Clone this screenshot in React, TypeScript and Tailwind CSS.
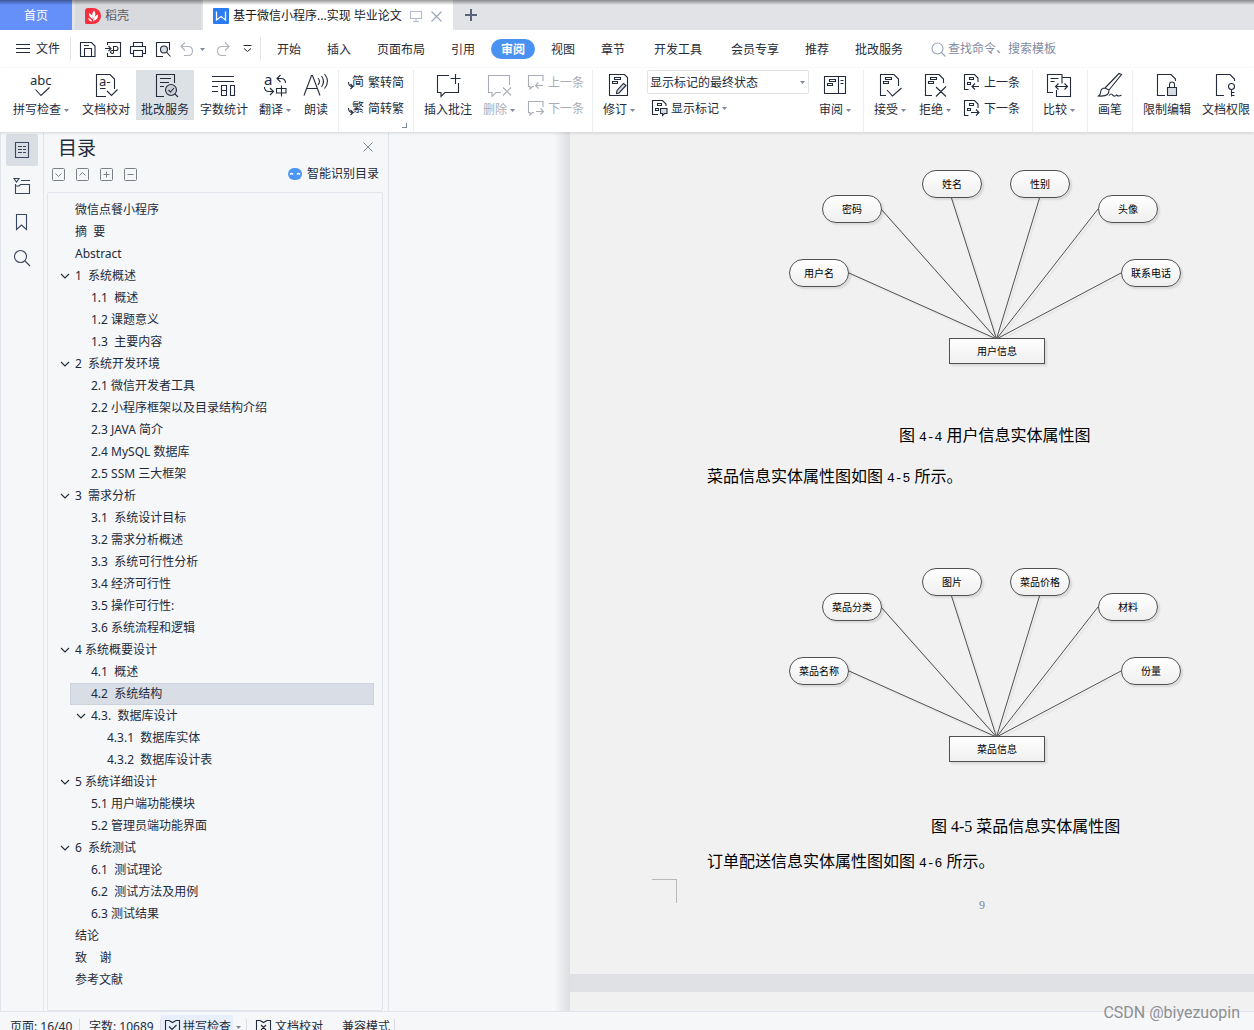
import type { ReactNode } from "react";

const UI_FONT = "font-['Noto_Sans','Noto_Sans_CJK_SC',sans-serif]";

function Svg({ w = 28, h = 26, children, className = "" }: { w?: number; h?: number; children: ReactNode; className?: string }) {
  return (
    <svg
      width={w}
      height={h}
      viewBox={`0 0 ${w} ${h}`}
      fill="none"
      stroke="currentColor"
      strokeWidth={1.1}
      className={`shrink-0 overflow-visible ${className}`}
      aria-hidden="true"
    >
      {children}
    </svg>
  );
}

function Caret({ className = "" }: { className?: string }) {
  return (
    <svg width="5" height="3" viewBox="0 0 5 3" className={`shrink-0 text-[#7d889c] ${className}`} aria-hidden="true">
      <path d="M0 0h5L2.5 3z" fill="currentColor" />
    </svg>
  );
}

/* ---------- Ribbon icons ---------- */

const SpellIcon = () => (
  <Svg>
    <text x="3" y="13" fontSize="13" fill="currentColor" stroke="none" fontFamily="Noto Sans">abc</text>
    <path d="M8.500 17.500l5.500 6 8.500-8" />
  </Svg>
);
const ProofIcon = () => (
  <Svg>
    <path d="M14 24.500H4.500V2.500H18l4.500 4.500V17M15 19l4.500 4.500 6-6M8 16.500h5.500" />
    <text x="7" y="14" fontSize="13" fill="currentColor" stroke="none" fontFamily="Noto Sans">a-</text>
  </Svg>
);
const ReviewServiceIcon = () => (
  <Svg>
    <path d="M13 24.500H5.500V2.500H23.500V11M9 6.500h11M9 10.500h9M9 14.500h4" />
    <circle cx="20" cy="18" r="5.500" fill="#c9ced6" />
    <path d="M17.500 18l2 2 3.500-4M24 22l3 3" />
  </Svg>
);
const CountIcon = () => (
  <Svg>
    <path d="M2 4.500h22M2 9.500h22M2 14.500h6M2 19.500h6M11.500 13.500h5v5h-5zM11.500 18.500h5v5h-5zM20.500 13.500h4v10h-4z" />
  </Svg>
);
const TranslateIcon = () => (
  <Svg>
    <text x="3" y="13" fontSize="15" fill="currentColor" stroke="none" fontFamily="Noto Sans">a</text>
    <path d="M19.500 3L16 6.500 19.500 10M16 6.500H20q4.500 0 4.500 4.500M3.500 15q0 4.500 4.500 4.500h4M9 16l3.500 3.500L9 23" />
    <path d="M15.500 16.500h9.500v4.500h-9.500zM20.500 13.500v11" />
  </Svg>
);
const ReadIcon = () => (
  <Svg>
    <path d="M2 23.500L9.500 3.500h1L18 23.500M5 16.500h10.500M16 6q3 3.500 0 7M19.500 4q4 5.500 0 11M22.500 2q6 7.500 0 14.500" />
  </Svg>
);
const AddCommentIcon = () => (
  <Svg>
    <path d="M15 3.500H3.500v17H7v4l4-4H24.500V11M21.500 2v10M16.500 6.500h10" />
  </Svg>
);
const DelCommentIcon = () => (
  <Svg>
    <path d="M16 20.500h-5l-4 4v-4H3.500v-17H24.500V13M18 15.500l8 8M26 15.500l-8 8" />
  </Svg>
);
const ReviseIcon = () => (
  <Svg>
    <path d="M19.500 2.500H4.500V23.500H22.500V5.500zM9.500 5.500h6v2h-6zM7.500 9.500h5v2h-5z" />
    <path d="M11.500 21.500l.5-3 6.500-7 2.500 2-7 7.500z" fill="#d5dae2" />
  </Svg>
);
const PaneIcon = () => (
  <Svg>
    <path d="M3.500 4.500h21v17h-21zM17.500 4.500v17M19.500 8.500h3M19.500 11.500h3M8.500 7.500h6v2h-6zM6.500 11.500h5v2h-5z" />
  </Svg>
);
const AcceptIcon = () => (
  <Svg>
    <path d="M10 23.500H4.500V2.500H18l4.500 4.500V14M9.500 5.500h6v2h-6zM7.500 9.500h5v2h-5zM11 18l5.500 6 9-8" />
  </Svg>
);
const RejectIcon = () => (
  <Svg>
    <path d="M11 23.500H4.500V2.500H18l4.500 4.500V11M9.500 5.500h6v2h-6zM7.500 9.500h5v2h-5zM15 15l10 9.500M25 14.500L15 24.500" />
  </Svg>
);
const CompareIcon = () => (
  <Svg>
    <path d="M8 20.500H2.500V2.500h14.500v9M17 5.500h8.500V24.500H11.500V18M5.500 6.500h8M5.500 9.500h4M10.500 14.500h12M13.500 11.500l-3 3 3 3M19.500 11.500l3 3-3 3" />
  </Svg>
);
const BrushIcon = () => (
  <Svg>
    <path d="M9 16L23 1.500l2.500 1L13 18M9 16q-4 0-4.500 4.500 0 2-2 3.500 6.500.500 9-1.500 1.500-2 1.500-4.500l-4-2M13 23.500q2.500-3 4 0 2 1.500 3.500-.5 2 2 5 0" />
  </Svg>
);
const LockDocIcon = () => (
  <Svg>
    <path d="M12 23.500H4.500V2.500H18l4.500 4.500V9" />
    <path d="M14.500 15.500h9v8h-9z" fill="#d9dde3" />
    <path d="M16.500 15.500v-3q0-2.500 2.500-2.500t2.500 2.500v3" />
  </Svg>
);
const KeyDocIcon = () => (
  <Svg>
    <path d="M12 23.500H4.500V2.500H18l4.500 4.500V9" />
    <circle cx="19.500" cy="14.500" r="3" />
    <path d="M19.500 17.500v7M19.500 20.500h3M19.500 23.500h3" />
  </Svg>
);

const SmallCommentPrev = () => (
  <Svg w={16} h={16}>
    <path d="M6 12.500H4.500l-2.500 2.500v-2.500H.5V1.500h14.500V7M15 11.500H8M10.500 8.500l-3 3 3 3" />
  </Svg>
);
const SmallCommentNext = () => (
  <Svg w={16} h={16}>
    <path d="M6 12.500H4.500l-2.500 2.500v-2.500H.5V1.500h14.500V7M8 11.500h7M12.500 8.500l3 3-3 3" />
  </Svg>
);
const SmallDocPrev = () => (
  <Svg w={16} h={16}>
    <path d="M4.500 15.500H.5V.5H10.500l3.500 3.500V8M5.500 3.500h4v2h-4zM3.500 8.500h3v2h-3zM15 12.500H8M11 9.500l-3 3 3 3" />
  </Svg>
);
const SmallDocNext = () => (
  <Svg w={16} h={16}>
    <path d="M4.500 15.500H.5V.5H10.500l3.500 3.500V8M5.500 3.500h4v2h-4zM3.500 8.500h3v2h-3zM7 12.500h8M12 9.500l3 3-3 3" />
  </Svg>
);
const MarkupIcon = () => (
  <Svg w={16} h={16}>
    <path d="M6 14.500H.5V.5H10.500l3.500 3.500V6M5.500 3.500h4v2h-4zM3.500 8.500h3v2h-3z" />
    <path d="M8.500 8.500h6.500v5h-2.500l-2 2v-2h-2z" fill="#d9dde3" />
  </Svg>
);
function ConvertIcon({ char }: { char: string }) {
  return (
    <span className="flex w-4 shrink-0 items-center">
      <Svg w={4} h={16}>
        <path d="M.5 8q0 4.500 4 4.500M2.500 10l2.500 2.500L2.500 15" />
      </Svg>
      <span aria-hidden="true">{char}</span>
    </span>
  );
}

/* ---------- Ribbon pieces ---------- */

function Big({ icon, label, width, caret, active, dim }: { icon: ReactNode; label: string; width: string; caret?: boolean; active?: boolean; dim?: boolean }) {
  return (
    <button
      type="button"
      className={`flex h-[50px] shrink-0 flex-col items-center whitespace-nowrap pt-0.5 ${width} ${active ? "bg-[#dce1e6]" : ""} ${dim ? "text-[#a9adb5]" : ""}`}
    >
      {icon}
      <span className="mt-1 flex items-center gap-[3px] leading-4">
        {label}
        {caret && <Caret />}
      </span>
    </button>
  );
}

function Pair({ items, pad, dim }: { items: [ReactNode, string][]; pad: string; dim?: boolean }) {
  return (
    <div className={`flex w-[74px] shrink-0 flex-col gap-2.5 pt-1 ${pad} ${dim ? "text-[#a9adb5]" : ""}`}>
      {items.map(([icon, label]) => (
        <button key={label} type="button" className="flex h-4 items-center gap-1 whitespace-nowrap leading-4">
          {icon}
          <span className="pt-0.5">{label}</span>
        </button>
      ))}
    </div>
  );
}

const Rule = ({ className = "" }: { className?: string }) => <div className={`h-[62px] w-px shrink-0 bg-[#eceef1] ${className}`} />;

function TabBar() {
  return (
    <header className="relative flex h-[30px] shrink-0 bg-[#e2e3e7]">
      <button type="button" className="w-[68px] grow-0 basis-[72px] bg-[#6590fa] pt-0.5 text-white">首页</button>
      <button type="button" className="ml-[3px] flex w-[126px] items-center gap-1 bg-[#d9dadd] pt-0.5 pl-2.5 text-[#555b66]">
        <svg width="16" height="16" viewBox="0 0 16 16" aria-hidden="true">
          <path d="M3 0h5a8 8 0 0 1 0 16H1.500A1.500 1.500 0 0 1 0 14.500V3a3 3 0 0 1 3-3z" fill="#f5303e" />
          <path d="M9 2.500q3 3.500-.5 8Q5.500 7 9 2.500zM4 5q3.500 1.500 4 6Q3.500 9.500 4 5zM13 6.500q.5 5-5 6.500Q8.500 8 13 6.500zM3 10q3 .5 4.500 3.500Q4 13.500 3 10z" fill="#fff" />
        </svg>
        稻壳
      </button>
      <div className="ml-0.5 flex w-[250px] items-center bg-white pt-0.5 pl-2.5">
        <svg width="16" height="16" viewBox="0 0 16 16" aria-hidden="true">
          <rect width="16" height="16" rx="1" fill="#2b7cf0" />
          <path d="M3.500 3.500v8.500L8 8.500l4.500 3.500V3.500" fill="none" stroke="#fff" strokeWidth="1.300" />
        </svg>
        <span className="ml-1 whitespace-nowrap text-[#15181f]">基于微信小程序...实现 毕业论文</span>
        <button type="button" aria-label="窗口" className="ml-2 text-[#b3bacb]">
          <Svg w={12} h={12}>
            <path d="M.5 1.500h11v7H.5zM6 8.500v3M3 11.500h6" />
          </Svg>
        </button>
        <button type="button" aria-label="关闭标签" className="ml-[9px] text-[#99a2b8]">
          <Svg w={11} h={11}>
            <path d="M.5 .5l10 10M10.500 .5l-10 10" />
          </Svg>
        </button>
      </div>
      <button type="button" aria-label="新建" className="ml-3 text-[#5a6379]">
        <Svg w={12} h={12}>
          <path d="M6 0v12M0 6h12" strokeWidth={2} />
        </Svg>
      </button>
      <div className="pointer-events-none absolute inset-x-0 top-0 h-[5px] bg-linear-to-b from-black/40 to-transparent" />
    </header>
  );
}

const MENU: [string, string][] = [
  ["开始", "w-[50px]"],
  ["插入", "w-[50px]"],
  ["页面布局", "w-[74px]"],
  ["引用", "w-[50px]"],
  ["审阅", "w-[50px]"],
  ["视图", "w-[50px]"],
  ["章节", "w-[50px]"],
  ["开发工具", "w-[80px]"],
  ["会员专享", "w-[74px]"],
  ["推荐", "w-[50px]"],
  ["批改服务", "w-[74px]"],
];

function MenuRow() {
  return (
    <nav className="flex h-[38px] shrink-0 items-center bg-white whitespace-nowrap">
      <button type="button" className="ml-4 flex items-center gap-1.5">
        <Svg w={14} h={12}>
          <path d="M0 1.500h14M0 5.500h14M0 9.500h14" strokeWidth={1} />
        </Svg>
        文件
      </button>
      <div className="ml-[10px] h-6 w-px bg-[#e3e5ea]" />
      <div className="flex items-center gap-[9px] pl-[9px]">
        <button type="button" aria-label="保存">
          <Svg w={16} h={16}><path d="M.5 1.500H11.500l3.500 3.500v10.500H.5zM4.500 15.500v-8h7v8M4 4.500h5" /></Svg>
        </button>
        <button type="button" aria-label="输出为PDF">
          <Svg w={16} h={16}><path d="M2.500 4V1.500h13v14h-13V12M0 7.500h6M3.500 5l2.500 2.500L3.500 10M8.500 12V5.500h2.500q2 0 2 2t-2 2H7q-1.500 0-1.500 1.500t3 1.500" /></Svg>
        </button>
        <button type="button" aria-label="打印">
          <Svg w={16} h={16}><path d="M3.500 5.500v-4h9v4M3.500 12.500H.5v-7h15v7h-3M3.500 9.500h9v6h-9z" /></Svg>
        </button>
        <button type="button" aria-label="打印预览">
          <Svg w={16} h={16}>
            <path d="M8 15.500H1.500v-14h13V9" />
            <circle cx="9" cy="8.500" r="3.500" fill="#d9dde3" />
            <path d="M11.500 11l4 4.500" />
          </Svg>
        </button>
        <button type="button" aria-label="撤销" className="text-[#adb2bb]">
          <Svg w={14} h={14}><path d="M5 .5L1 4.500l4 4M1 4.500h7q4.500 0 4.500 4.500T8 13.500H4" /></Svg>
        </button>
      </div>
      <Caret className="ml-1.5" />
      <button type="button" aria-label="恢复" className="ml-[11px] text-[#adb2bb]">
        <Svg w={14} h={14}><path d="M9 .5l4 4-4 4M13 4.500H6Q1.500 4.500 1.500 9T6 13.500h4" /></Svg>
      </button>
      <button type="button" aria-label="自定义" className="ml-[13px]">
        <Svg w={9} h={8}><path d="M.5 .5h8M1 3.500l3.500 3L8 3.500" strokeWidth={1} /></Svg>
      </button>
      <div className="ml-2 h-6 w-px bg-[#e3e5ea]" />
      <div className="ml-[3px] flex">
        {MENU.map(([label, width]) => (
          <button key={label} type="button" className={`${width} flex shrink-0 justify-center`}>
            {label === "审阅" ? (
              <span className="rounded-full bg-[#4a92f2] px-2.5 pt-[3px] pb-px leading-4 font-bold text-white">{label}</span>
            ) : (
              <span className="pt-[3px] pb-px leading-4">{label}</span>
            )}
          </button>
        ))}
      </div>
      <label className="ml-[15px] flex items-center gap-0.5 text-[#9aa5b8]">
        <Svg w={15} h={15}>
          <circle cx="6.500" cy="6.500" r="5.500" />
          <path d="M10.500 10.500l4 4" />
        </Svg>
        <input aria-label="查找命令" placeholder="查找命令、搜索模板" className="w-32 bg-transparent outline-none placeholder:text-[#7f8ba3]" />
      </label>
    </nav>
  );
}

function Ribbon() {
  return (
    <div className="relative z-10 flex h-16 shrink-0 bg-white pt-0.5 pl-1.5 shadow-[0_1px_3px_rgba(0,0,0,0.14)]">
      <Big icon={<SpellIcon />} label="拼写检查" width="w-[70px]" caret />
      <Big icon={<ProofIcon />} label="文档校对" width="w-[60px]" />
      <Big icon={<ReviewServiceIcon />} label="批改服务" width="w-[58px]" active />
      <Big icon={<CountIcon />} label="字数统计" width="w-[60px]" />
      <Big icon={<TranslateIcon />} label="翻译" width="w-[42px]" caret />
      <Big icon={<ReadIcon />} label="朗读" width="w-[40px]" />
      <Rule className="ml-0.5" />
      <div className="relative shrink-0">
        <Pair pad="pl-[9px]" items={[[<ConvertIcon char="简" />, "繁转简"], [<ConvertIcon char="繁" />, "简转繁"]]} />
        <div className="absolute right-1.5 bottom-1 size-[5px] border-r border-b border-[#7d889c]" />
      </div>
      <Rule />
      <Big icon={<AddCommentIcon />} label="插入批注" width="w-[64px] ml-0.5" />
      <Big icon={<DelCommentIcon />} label="删除" width="w-[38px]" caret dim />
      <Pair pad="pl-2.5" dim items={[[<SmallCommentPrev />, "上一条"], [<SmallCommentNext />, "下一条"]]} />
      <Rule />
      <Big icon={<ReviseIcon />} label="修订" width="w-[52px]" caret />
      <div className="flex w-[166px] shrink-0 flex-col gap-1.5 px-0.5">
        <label className="relative flex items-center">
          <select aria-label="标记状态" className="h-6 w-full appearance-none rounded-xs border border-[#dfe2e7] bg-white pt-px pl-0.5 leading-4">
            <option>显示标记的最终状态</option>
          </select>
          <Caret className="pointer-events-none absolute right-1" />
        </label>
        <button type="button" className="ml-[5px] flex h-4 items-center gap-[3px] leading-4">
          <MarkupIcon />
          <span className="pt-0.5">显示标记</span>
          <Caret />
        </button>
      </div>
      <Big icon={<PaneIcon />} label="审阅" width="w-[48px]" caret />
      <Rule className="ml-1" />
      <Big icon={<AcceptIcon />} label="接受" width="w-[44px] ml-1" caret />
      <Big icon={<RejectIcon />} label="拒绝" width="w-[46px]" caret />
      <Pair pad="pl-1.5" items={[[<SmallDocPrev />, "上一条"], [<SmallDocNext />, "下一条"]]} />
      <Rule />
      <Big icon={<CompareIcon />} label="比较" width="w-[52px]" caret />
      <Rule className="ml-0.5" />
      <Big icon={<BrushIcon />} label="画笔" width="w-[44px]" />
      <Rule />
      <Big icon={<LockDocIcon />} label="限制编辑" width="w-[68px]" />
      <Big icon={<KeyDocIcon />} label="文档权限" width="w-[50px]" />
    </div>
  );
}

/* ---------- Left side ---------- */

function SideBar() {
  const cell = "flex size-8 items-center justify-center rounded-xs";
  return (
    <aside className="flex w-11 shrink-0 flex-col gap-1 border-x border-[#e1e4ea] pt-0.5 pl-[5px] text-[#3a4560]">
      <button type="button" aria-label="目录" className={`${cell} bg-[#d9dee5]`}>
        <Svg w={16} h={18}>
          <path d="M1.500 1.500h13v15h-13zM4 5.500h4M9 5.500h3M4 8.500h4M9 8.500h3M4 11.500h4M9 11.500h3" />
        </Svg>
      </button>
      <button type="button" aria-label="章节" className={cell}>
        <Svg w={18} h={18}>
          <path d="M1 1.500h5L3.500 5zM8 3.500h9M2.500 7v9.500h14v-9H7.500l-1.500 1.500H2.500" />
        </Svg>
      </button>
      <button type="button" aria-label="书签" className={cell}>
        <Svg w={16} h={18}>
          <path d="M2.500 1.500h10v15l-5-4.500-5 4.500z" />
        </Svg>
      </button>
      <button type="button" aria-label="查找" className={cell}>
        <Svg w={18} h={18}>
          <circle cx="7.500" cy="7.500" r="6" />
          <path d="M12 12l5 5" />
        </Svg>
      </button>
    </aside>
  );
}

type Node = { text: string; level?: 1 | 2; open?: boolean; selected?: boolean };

const TOC: Node[] = [
  { text: "微信点餐小程序" },
  { text: "摘  要" },
  { text: "Abstract" },
  { text: "1  系统概述", open: true },
  { text: "1.1  概述", level: 1 },
  { text: "1.2 课题意义", level: 1 },
  { text: "1.3  主要内容", level: 1 },
  { text: "2  系统开发环境", open: true },
  { text: "2.1 微信开发者工具", level: 1 },
  { text: "2.2 小程序框架以及目录结构介绍", level: 1 },
  { text: "2.3 JAVA 简介", level: 1 },
  { text: "2.4 MySQL 数据库", level: 1 },
  { text: "2.5 SSM 三大框架", level: 1 },
  { text: "3  需求分析", open: true },
  { text: "3.1  系统设计目标", level: 1 },
  { text: "3.2 需求分析概述", level: 1 },
  { text: "3.3  系统可行性分析", level: 1 },
  { text: "3.4 经济可行性", level: 1 },
  { text: "3.5 操作可行性:", level: 1 },
  { text: "3.6 系统流程和逻辑", level: 1 },
  { text: "4 系统概要设计", open: true },
  { text: "4.1  概述", level: 1 },
  { text: "4.2  系统结构", level: 1, selected: true },
  { text: "4.3.  数据库设计", level: 1, open: true },
  { text: "4.3.1  数据库实体", level: 2 },
  { text: "4.3.2  数据库设计表", level: 2 },
  { text: "5 系统详细设计", open: true },
  { text: "5.1 用户端功能模块", level: 1 },
  { text: "5.2 管理员端功能界面", level: 1 },
  { text: "6  系统测试", open: true },
  { text: "6.1  测试理论", level: 1 },
  { text: "6.2  测试方法及用例", level: 1 },
  { text: "6.3 测试结果", level: 1 },
  { text: "结论" },
  { text: "致    谢" },
  { text: "参考文献" },
];

function TocRow({ node }: { node: Node }) {
  const indent = node.open ? "pl-[5px]" : node.level === 2 ? "pl-[37px]" : node.level === 1 ? "pl-[21px]" : "pl-[5px]";
  return (
    <li className={`flex h-[22px] items-center pr-2 ${node.open && node.level === 1 ? "pl-7" : "pl-3"}`}>
      <span className="w-2.5 shrink-0">
        {node.open && (
          <Svg w={10} h={6}>
            <path d="M1 1l4 4 4-4" />
          </Svg>
        )}
      </span>
      <button
        type="button"
        className={`h-full flex-1 text-left leading-5 whitespace-pre ${indent} ${node.selected ? "bg-[#d9dee6] shadow-[inset_0_0_0_1px_#cdd3dd]" : ""}`}
      >
        {node.text}
      </button>
    </li>
  );
}

function TocPanel() {
  const tools: [string, string][] = [
    ["展开", "M3.500 5.500l3 3 3-3"],
    ["收起", "M3.500 7.500l3-3 3 3"],
    ["增加", "M3.500 6.500h6M6.500 3.500v6"],
    ["减少", "M3.500 6.500h6"],
  ];
  return (
    <section className="flex w-[345px] shrink-0 flex-col border-r border-[#e1e4ea] pr-[5px] pl-[3px]">
      <div className="flex h-[30px] items-center justify-between pr-2.5 pl-[11px]">
        <h2 className="pt-0.5 text-[19px] leading-6">目录</h2>
        <button type="button" aria-label="关闭" className="text-[#7c869a]">
          <Svg w={10} h={10}>
            <path d="M.5 .5l9 9M9.500 .5l-9 9" strokeWidth={1} />
          </Svg>
        </button>
      </div>
      <div className="flex h-[30px] items-center pb-1.5 pl-[5px]">
        <div className="flex gap-[11px] text-[#7a7f88]">
          {tools.map(([label, d]) => (
            <button key={label} type="button" aria-label={label}>
              <Svg w={13} h={13}>
                <rect x=".5" y=".5" width="12" height="12" rx="1" strokeWidth={1} />
                <path d={d} strokeWidth={1} />
              </Svg>
            </button>
          ))}
        </div>
        <button type="button" className="mr-1 ml-auto flex items-center gap-[5px] leading-4">
          <svg width="14" height="12" viewBox="0 0 14 12" aria-hidden="true">
            <rect width="14" height="12" rx="6" fill="#4b96f5" />
            <path d="M2 6.500q1.500-2 3 0M9 6.500q1.500-2 3 0" fill="none" stroke="#fff" strokeWidth="1.300" />
          </svg>
          智能识别目录
        </button>
      </div>
      <ul className="flex-1 rounded-xs border border-[#e1e4ea] pt-1.5">
        {TOC.map((node) => (
          <TocRow key={node.text} node={node} />
        ))}
      </ul>
    </section>
  );
}

/* ---------- Document ---------- */

const PLACES = [
  "left-0 top-[89px]",
  "left-[33px] top-[25px]",
  "left-[133px] top-0",
  "left-[221px] top-0",
  "left-[309px] top-[25px]",
  "left-[332px] top-[89px]",
];

function EntityDiagram({ entity, attributes }: { entity: string; attributes: string[] }) {
  const lines = "M60 103L207.500 169M92 39L207.500 169M162.500 28L207.500 169M250.500 28L207.500 169M309 39L207.500 169M332 103L207.500 169";
  return (
    <figure className="relative ml-[137px] h-[196px] w-[392px] text-[10px] text-black">
      <svg width="392" height="196" viewBox="0 0 392 196" fill="none" className="absolute inset-0" aria-hidden="true">
        <path d={lines} stroke="#e8e8e8" strokeWidth="2" transform="translate(2 2)" />
        <path d={lines} stroke="#505050" />
      </svg>
      {attributes.map((name, i) => (
        <div
          key={name}
          className={`absolute flex h-7 w-[60px] items-center justify-center rounded-full border border-[#505050] bg-linear-to-b from-white to-[#efefef] pt-px whitespace-nowrap shadow-[2px_2px_2px_rgba(0,0,0,0.1)] ${PLACES[i]}`}
        >
          {name}
        </div>
      ))}
      <div className="absolute top-[168px] left-40 flex h-[26px] w-24 items-center justify-center border border-[#505050] bg-linear-to-b from-white to-[#efefef] pt-px shadow-[2px_2px_2px_rgba(0,0,0,0.1)]">
        {entity}
      </div>
    </figure>
  );
}

const Mono = ({ children }: { children: string }) => <span className="font-['Liberation_Mono'] text-[13px] leading-none">{children}</span>;

function DocumentArea() {
  return (
    <main className="flex min-w-0 flex-1">
      <div className="flex w-[181px] shrink-0 justify-end">
        <div className="w-4 bg-linear-to-r from-transparent to-[#dcdee1]" />
      </div>
      <div className="flex min-w-0 flex-1 flex-col bg-linear-to-b from-[#dcdddf] to-[#e0e1e4]">
        <article className="shrink-0 bg-[#f1f1f1] pt-[38px] pb-[61px] pl-[82px] font-['Liberation_Serif','Noto_Sans_CJK_SC',serif] text-base leading-6 whitespace-nowrap text-black">
          <EntityDiagram entity="用户信息" attributes={["用户名", "密码", "姓名", "性别", "头像", "联系电话"]} />
          <p className="mt-[58px] h-6 pl-[247px]">图 <Mono>4-4</Mono> 用户信息实体属性图</p>
          <p className="mt-[17px] h-6 pl-[55px]">菜品信息实体属性图如图 <Mono>4-5</Mono> 所示。</p>
          <div className="mt-[79px]">
            <EntityDiagram entity="菜品信息" attributes={["菜品名称", "菜品分类", "图片", "菜品价格", "材料", "份量"]} />
          </div>
          <p className="mt-[51px] h-6 pl-[279px]">图 4-5 菜品信息实体属性图</p>
          <p className="mt-[11px] h-6 pl-[55px]">订单配送信息实体属性图如图 <Mono>4-6</Mono> 所示。</p>
          <footer className="mt-[5px] flex h-[34px] items-end">
            <span className="mb-auto h-6 w-[25px] border-t border-r border-[#b9b9b9]" />
            <span className="ml-[302px] text-xs leading-4 text-[#7b8494]">9</span>
          </footer>
        </article>
        <div className="mt-[18px] flex-1 bg-[#f1f1f1]" />
      </div>
    </main>
  );
}

function StatusBar() {
  const rule = <div className="h-4 w-px bg-[#dadde3]" />;
  return (
    <footer className="h-[19px] shrink-0 overflow-hidden border-t border-[#e1e4ea] whitespace-nowrap">
      <div className="flex h-[30px] items-center">
        <span className="w-[79px] pl-2.5">页面: 16/40</span>
        {rule}
        <span className="w-20 pl-[9px]">字数: 10689</span>
        {rule}
        <button type="button" className="flex h-6 items-center gap-[3px] bg-[#e6effb] pr-0.5 pl-1">
          <Svg w={15} h={15}>
            <path d="M4 .5H.5v13h14V.5H11M4 .5l3.500 2 3.500-2M4 6.500l3 3 4.500-4.500" />
          </Svg>
          拼写检查
        </button>
        <Caret className="mx-[3px]" />
        <div className="ml-0.5 h-4 w-px bg-[#dadde3]" />
        <button type="button" className="ml-[9px] flex items-center gap-1">
          <Svg w={15} h={15}>
            <path d="M4 .5H.5v13h14V.5H11M4 .5l3.500 2 3.500-2M5 5l5 5M10 5l-5 5" />
          </Svg>
          文档校对
        </button>
        <span className="mr-1 ml-[19px]">兼容模式</span>
        {rule}
      </div>
    </footer>
  );
}

export default function App() {
  return (
    <div className={`relative flex h-screen flex-col overflow-hidden bg-[#f6f7f9] text-xs text-[#232b3b] ${UI_FONT}`}>
      <TabBar />
      <MenuRow />
      <Ribbon />
      <div className="flex min-h-0 flex-1 overflow-hidden">
        <SideBar />
        <TocPanel />
        <DocumentArea />
      </div>
      <StatusBar />
      <div className="pointer-events-none absolute right-3.5 bottom-[5px] font-['Roboto'] text-base leading-6 text-[#8d8f93]">CSDN @biyezuopin</div>
    </div>
  );
}
